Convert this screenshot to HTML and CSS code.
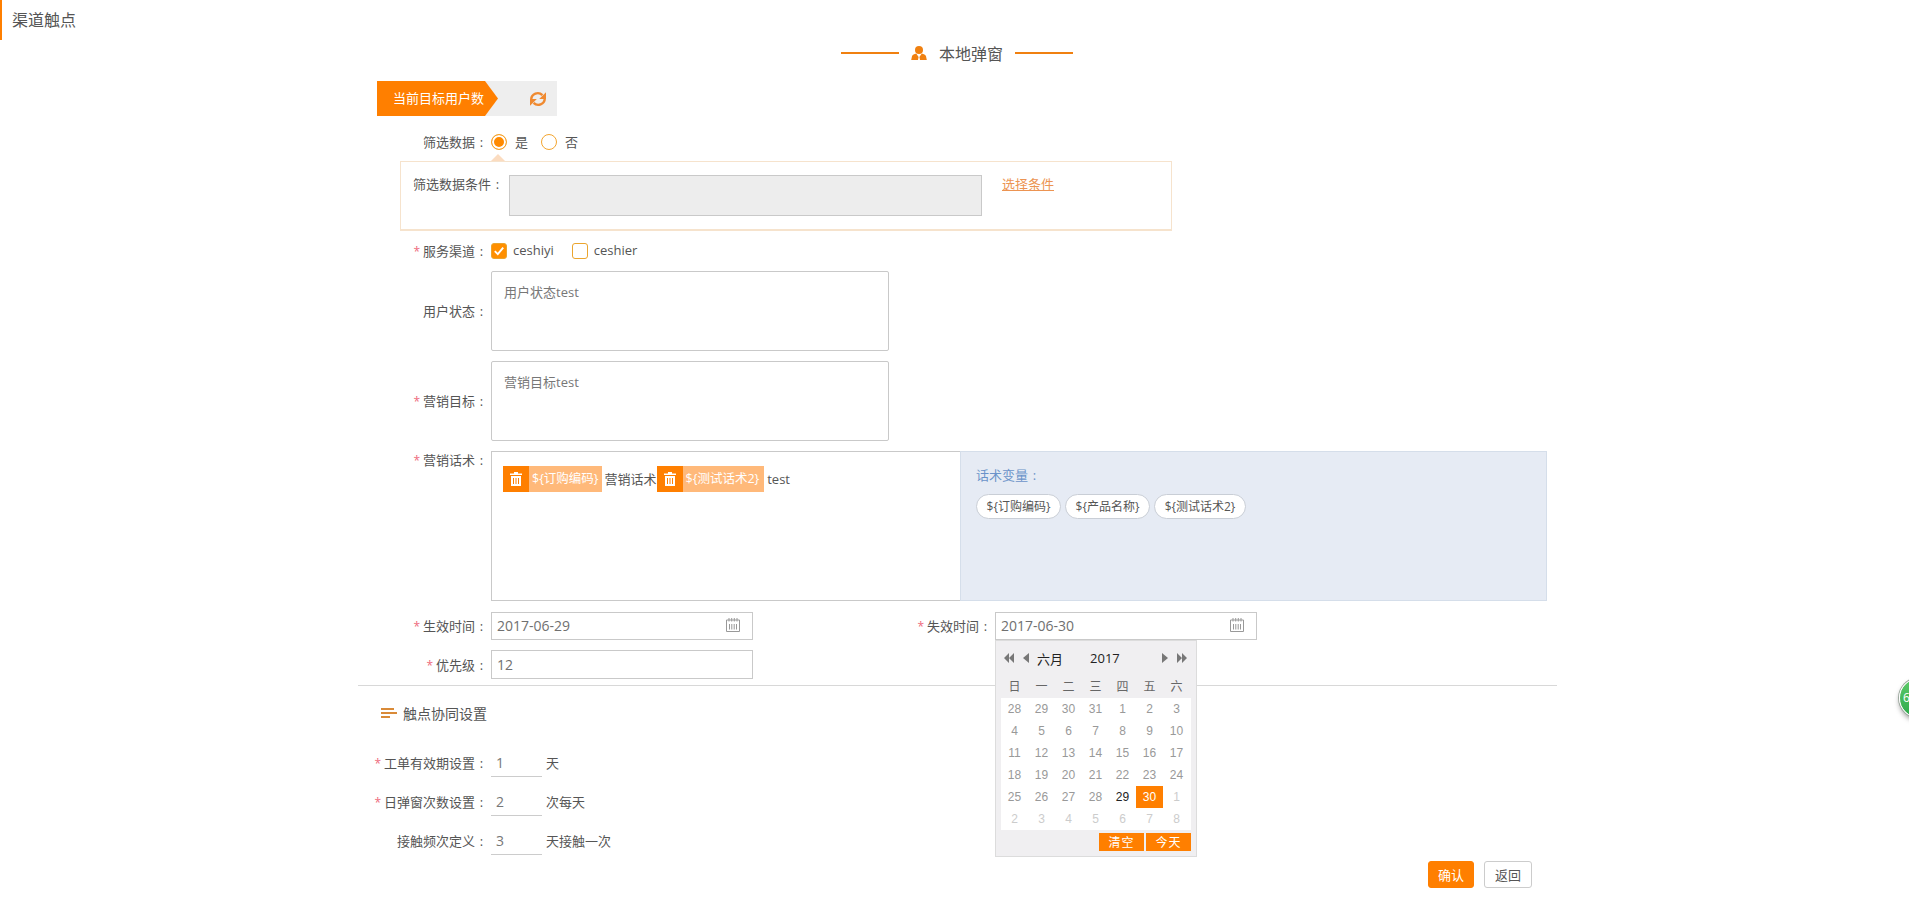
FILE: index.html
```html
<!DOCTYPE html>
<html lang="zh-CN">
<head>
    <meta charset="UTF-8">
    <meta name="viewport" content="width=device-width, initial-scale=1.0">
    <title>渠道触点</title>
    <link rel="stylesheet" href="styles.css">
</head>
<body>
    <header class="page-title">渠道触点</header>

    <main class="panel">
        <h2 class="channel-head">
            <span class="head-line"></span>
            <svg class="head-icon" viewBox="0 0 16 14"><circle cx="8" cy="4" r="4"/><path d="M5.2 7.6 7.6 11 7 14H0.2L1 10.2C1.4 8.8 3.4 8 5.2 7.6ZM10.8 7.6C12.6 8 14.6 8.8 15 10.2L15.8 14H9L8.4 11Z"/></svg>
            <span class="head-text">本地弹窗</span>
            <span class="head-line"></span>
        </h2>

        <div class="target-bar">
            <div class="target-label">当前目标用户数</div>
            <svg class="refresh-icon" viewBox="0 0 18 16">
                <path class="refresh-arc" d="M2.2 8.500A6.500 6.500 0 0 1 13.400 4.200"/>
                <path d="M17 1.200v6.800h-6.800Z"/>
                <path class="refresh-arc" d="M15.800 7.500A6.500 6.500 0 0 1 4.600 11.800"/>
                <path d="M1 14.800v-6.800h6.800Z"/>
            </svg>
        </div>

        <div class="row row-choice first-choice">
            <div class="label">筛选数据<span class="colon">:</span></div>
            <span class="radio radio-on"></span><span class="opt">是</span>
            <span class="radio radio-off"></span><span class="opt">否</span>
        </div>

        <div class="filter-box">
            <div class="filter-label">筛选数据条件<span class="colon">:</span></div>
            <div class="filter-input"></div>
            <a class="filter-link" href="#">选择条件</a>
        </div>

        <div class="row row-choice service-row">
            <div class="label"><span class="star">*</span>服务渠道<span class="colon">:</span></div>
            <span class="check check-on"><svg viewBox="0 0 14 14"><path d="M2.800 7.200 5.800 10.200 11.200 3.600" fill="none" stroke="#fff" stroke-width="1.900"/></svg></span><span class="opt opt-latin">ceshiyi</span>
            <span class="check"></span><span class="opt opt-latin">ceshier</span>
        </div>

        <div class="row row-area">
            <div class="label">用户状态<span class="colon">:</span></div>
            <div class="area">用户状态test</div>
        </div>

        <div class="row row-area gap-10">
            <div class="label"><span class="star">*</span>营销目标<span class="colon">:</span></div>
            <div class="area">营销目标test</div>
        </div>

        <div class="row row-script gap-10">
            <div class="label"><span class="star">*</span>营销话术<span class="colon">:</span></div>
            <div class="script-box">
                <div class="script-text">
                    <span class="tag"><span class="tag-del"><svg viewBox="0 0 12 14"><path d="M4 0h4v1.500h4V3H0V1.500h4ZM1 4h10v10H1ZM3 6v6h1V6ZM5.500 6v6h1V6ZM8 6v6h1V6Z" fill-rule="evenodd"/></svg></span><span class="tag-name">${订购编码}</span></span><span class="plain">营销话术</span><span class="tag tag-next"><span class="tag-del"><svg viewBox="0 0 12 14"><path d="M4 0h4v1.500h4V3H0V1.500h4ZM1 4h10v10H1ZM3 6v6h1V6ZM5.500 6v6h1V6ZM8 6v6h1V6Z" fill-rule="evenodd"/></svg></span><span class="tag-name">${测试话术2}</span></span><span class="plain plain-end">test</span>
                </div>
                <div class="script-vars">
                    <div class="vars-title">话术变量<span class="colon">:</span></div>
                    <div class="vars-list">
                        <span class="chip">${订购编码}</span>
                        <span class="chip">${产品名称}</span>
                        <span class="chip chip-wide">${测试话术2}</span>
                    </div>
                </div>
            </div>
        </div>

        <div class="row row-date">
            <div class="label"><span class="star">*</span>生效时间<span class="colon">:</span></div>
            <div class="field">
                <span>2017-06-29</span>
                <svg class="cal-icon" viewBox="0 0 14 14"><path d="M.5 2h13v11.500H.5ZM3 0v3.500M5.700 0v3.500M8.300 0v3.500M11 0v3.500M3.500 6v5.500M5.800 6v5.500M8.200 6v5.500M10.500 6v5.500"/></svg>
            </div>
            <div class="label label-end"><span class="star">*</span>失效时间<span class="colon">:</span></div>
            <div class="field field-open">
                <span>2017-06-30</span>
                <svg class="cal-icon" viewBox="0 0 14 14"><path d="M.5 2h13v11.500H.5ZM3 0v3.500M5.700 0v3.500M8.300 0v3.500M11 0v3.500M3.500 6v5.500M5.800 6v5.500M8.200 6v5.500M10.500 6v5.500"/></svg>

                <div class="calendar">
                    <div class="cal-head">
                        <svg class="cal-arrow arrow-dbl" viewBox="0 0 10 10"><path d="M5 0v10L0 5ZM10 0v10L5 5Z"/></svg>
                        <svg class="cal-arrow arrow-one" viewBox="0 0 6 10"><path d="M6 0v10L0 5Z"/></svg>
                        <span class="cal-month">六月</span>
                        <span class="cal-year">2017</span>
                        <svg class="cal-arrow arrow-next" viewBox="0 0 6 10"><path d="M0 0v10L6 5Z"/></svg>
                        <svg class="cal-arrow arrow-last" viewBox="0 0 10 10"><path d="M0 0v10L5 5ZM5 0v10L10 5Z"/></svg>
                    </div>
                    <div class="cal-week">
                        <span>日</span><span>一</span><span>二</span><span>三</span><span>四</span><span>五</span><span>六</span>
                    </div>
                    <div class="cal-days">
                        <span>28</span><span>29</span><span>30</span><span>31</span><span>1</span><span>2</span><span>3</span>
                        <span>4</span><span>5</span><span>6</span><span>7</span><span>8</span><span>9</span><span>10</span>
                        <span>11</span><span>12</span><span>13</span><span>14</span><span>15</span><span>16</span><span>17</span>
                        <span>18</span><span>19</span><span>20</span><span>21</span><span>22</span><span>23</span><span>24</span>
                        <span>25</span><span>26</span><span>27</span><span>28</span><span class="today">29</span><span class="picked">30</span><span class="off">1</span>
                        <span class="off">2</span><span class="off">3</span><span class="off">4</span><span class="off">5</span><span class="off">6</span><span class="off">7</span><span class="off">8</span>
                    </div>
                    <div class="cal-foot">
                        <span class="cal-btn">清空</span>
                        <span class="cal-btn">今天</span>
                    </div>
                </div>
            </div>
        </div>

        <div class="row row-date gap-10 row-priority">
            <div class="label"><span class="star">*</span>优先级<span class="colon">:</span></div>
            <div class="field"><span>12</span></div>
        </div>

        <hr class="divider">

        <h3 class="sub-head">
            <svg class="sub-icon" viewBox="0 0 16 10"><path d="M0 0h13v2H0ZM0 4h16v2H0ZM0 8h9v2H0Z"/></svg>
            触点协同设置
        </h3>

        <div class="row row-num first-num">
            <div class="label"><span class="star">*</span>工单有效期设置<span class="colon">:</span></div>
            <div class="num">1</div><span class="unit">天</span>
        </div>
        <div class="row row-num">
            <div class="label"><span class="star">*</span>日弹窗次数设置<span class="colon">:</span></div>
            <div class="num">2</div><span class="unit">次每天</span>
        </div>
        <div class="row row-num">
            <div class="label">接触频次定义<span class="colon">:</span></div>
            <div class="num">3</div><span class="unit">天接触一次</span>
        </div>

        <div class="actions">
            <button class="btn btn-ok" type="button">确认</button>
            <button class="btn" type="button">返回</button>
        </div>
    </main>

    <div class="float-ball">6</div>
</body>
</html>
```

FILE: styles.css
```css
body, h2, h3, hr {
    margin: 0;
    padding: 0;
}

body {
    font-family: "Open Sans", "Noto Sans CJK SC", sans-serif;
    font-size: 13px;
    color: #555;
    background-color: #fff;
    height: 903px;
    overflow: hidden;
    position: relative;
}

.page-title {
    height: 40px;
    line-height: 40px;
    border-left: 2px solid #ff7f00;
    padding-left: 10px;
    font-size: 16px;
}

.panel {
    width: 1200px;
    margin-left: 357px;
}

.channel-head {
    height: 26px;
    display: flex;
    align-items: center;
    justify-content: center;
    font-size: 16px;
    font-weight: normal;
}

.head-line {
    width: 58px;
    height: 2px;
    background-color: #f08010;
}

.head-icon {
    width: 16px;
    height: 14px;
    fill: #f08010;
    margin: 0 12px;
}

.head-text {
    margin-right: 12px;
}

.target-bar {
    width: 180px;
    height: 35px;
    margin: 15px 0 0 20px;
    background-color: #eee;
    display: flex;
    align-items: center;
}

.target-label {
    width: 121px;
    height: 35px;
    line-height: 35px;
    padding-left: 16px;
    box-sizing: border-box;
    color: #fff;
    background-color: #ff7f00;
    clip-path: polygon(0 0, 108px 0, 121px 50%, 108px 100%, 0 100%);
}

.refresh-icon {
    width: 18px;
    height: 16px;
    fill: #f08a30;
    margin-left: 31px;
}

.refresh-arc {
    fill: none;
    stroke: #f08a30;
    stroke-width: 2.400;
}

.row {
    display: flex;
    align-items: center;
}

.label {
    flex: none;
    width: 131px;
    margin-right: 3px;
    padding-bottom: 2px;
    text-align: right;
}

.colon {
    display: inline-block;
    width: 13px;
    text-align: center;
}

.star {
    color: #ee6a7c;
    margin-right: 3px;
    font-size: 12px;
}

.row-choice {
    height: 24px;
}

.first-choice {
    margin-top: 14px;
}

.radio {
    width: 16px;
    height: 16px;
    box-sizing: border-box;
    border: 1px solid #f3a530;
    border-radius: 50%;
    background-color: #fff;
}

.radio-on {
    background-color: #ff8a00;
    box-shadow: inset 0 0 0 2px #fff;
}

.opt {
    margin: 0 13px 0 8px;
    padding-bottom: 2px;
    color: #555;
}

.opt-latin {
    margin: 0 18px 0 6px;
}

.filter-box {
    position: relative;
    width: 772px;
    height: 70px;
    box-sizing: border-box;
    margin: 7px 0 0 43px;
    border: 1px solid #f6e3cd;
    border-bottom-width: 2px;
    display: flex;
    align-items: flex-start;
}

.filter-box::before {
    content: "";
    position: absolute;
    top: -8px;
    left: 90px;
    border-left: 7px solid transparent;
    border-right: 7px solid transparent;
    border-bottom: 7px solid #fbdcc0;
}

.filter-label {
    width: 96px;
    margin: 12px 0 0 12px;
    line-height: 20px;
}

.filter-input {
    width: 473px;
    height: 41px;
    box-sizing: border-box;
    margin-top: 13px;
    border: 1px solid #c9c9c9;
    background-color: #ededed;
}

.filter-link {
    margin: 12px 0 0 20px;
    line-height: 20px;
    color: #ec9452;
}

.service-row {
    margin-top: 8px;
}

.check {
    width: 16px;
    height: 16px;
    box-sizing: border-box;
    border: 1px solid #eba52e;
    border-radius: 3px;
    display: block;
}

.check-on {
    background-color: #ff8f00;
}

.check svg {
    display: block;
    width: 14px;
    height: 14px;
}

.row-area {
    height: 80px;
    margin-top: 8px;
}

.gap-10 {
    margin-top: 10px;
}

.area {
    width: 398px;
    height: 80px;
    box-sizing: border-box;
    border: 1px solid #c9c9c9;
    border-radius: 2px;
    padding: 10px 12px;
    line-height: 20px;
    color: #777;
}

.row-script {
    align-items: flex-start;
}

.row-script .label {
    line-height: 18px;
    padding-bottom: 0;
}

.script-box {
    width: 1056px;
    height: 150px;
    display: flex;
}

.script-text {
    width: 469px;
    box-sizing: border-box;
    border: 1px solid #c9c9c9;
    border-right: 0;
    padding: 14px 0 0 11px;
    display: flex;
    align-items: flex-start;
}

.tag {
    height: 26px;
    display: flex;
    background-color: #ffb97a;
    color: #fff;
}

.tag-del {
    width: 26px;
    background-color: #ff7f00;
    display: flex;
    align-items: center;
    justify-content: center;
}

.tag-del svg {
    width: 12px;
    height: 14px;
    fill: #fff;
}

.tag-name {
    line-height: 26px;
    padding: 0 3px;
    font-size: 12.500px;
    white-space: nowrap;
}

.tag-next .tag-name {
    padding-right: 5px;
}

.plain {
    line-height: 26px;
    margin-left: 3px;
    color: #555;
}

.script-vars {
    flex: 1;
    box-sizing: border-box;
    border: 1px solid #d5deea;
    background-color: #e6ebf4;
    padding: 13px 0 0 15px;
}

.vars-title {
    color: #6b93c9;
    line-height: 20px;
}

.vars-list {
    margin-top: 9px;
    display: flex;
    gap: 4px;
}

.chip {
    width: 85px;
    height: 25px;
    line-height: 23px;
    box-sizing: border-box;
    border: 1px solid #c9ced6;
    border-radius: 13px;
    background-color: #fff;
    text-align: center;
    font-size: 12px;
    color: #555;
    white-space: nowrap;
}

.chip-wide {
    width: 92px;
}

.row-date {
    margin-top: 11px;
}

.row-priority {
    margin-top: 10px;
}

.field {
    position: relative;
    width: 262px;
    height: 28px;
    box-sizing: border-box;
    border: 1px solid #c9c9c9;
    padding: 0 5px 2px;
    display: flex;
    align-items: center;
    justify-content: space-between;
    font-size: 14px;
    color: #707070;
}

.row-priority .field {
    height: 29px;
    padding-bottom: 0;
}

.row-priority .label {
    padding-bottom: 0;
}

.label-end {
    width: 239px;
}

.cal-icon {
    width: 14px;
    height: 14px;
    margin-right: 7px;
    fill: none;
    stroke: #999;
    stroke-width: 1;
}

.calendar {
    position: absolute;
    top: 27px;
    left: -1px;
    z-index: 2;
    width: 202px;
    height: 217px;
    box-sizing: border-box;
    border: 1px solid #dcdcdc;
    background-color: #f0eff1;
    padding: 0 5px;
    font-family: "Liberation Sans", "Noto Sans CJK SC", sans-serif;
    font-size: 12px;
    color: #666;
}

.cal-head {
    height: 36px;
    box-sizing: border-box;
    padding-bottom: 2px;
    display: flex;
    align-items: center;
    color: #222;
    font-size: 13px;
    font-family: "Open Sans", "Noto Sans CJK SC", sans-serif;
    white-space: nowrap;
}

.cal-arrow {
    flex: none;
    height: 10px;
    fill: #777;
}

.arrow-dbl {
    width: 10px;
    margin-left: 3px;
}

.arrow-one {
    width: 6px;
    margin-left: 9px;
}

.arrow-next {
    width: 6px;
    margin-left: 42px;
}

.arrow-last {
    width: 10px;
    margin-left: 9px;
}

.cal-month {
    margin-left: 8px;
}

.cal-year {
    margin-left: 27px;
}

.cal-week,
.cal-days {
    display: grid;
    grid-template-columns: repeat(7, 27px);
    text-align: center;
}

.cal-week {
    height: 21px;
    line-height: 20px;
}

.cal-days {
    grid-auto-rows: 22px;
    line-height: 22px;
    background-color: #fff;
    color: #999;
    padding-right: 1px;
}

.cal-days .today {
    color: #222;
}

.cal-days .picked {
    color: #fff;
    background-color: #ff7f00;
}

.cal-days .off {
    color: #ccc;
}

.cal-foot {
    display: flex;
    justify-content: flex-end;
    gap: 2px;
    margin-top: 3px;
}

.cal-btn {
    width: 45px;
    height: 18px;
    line-height: 18px;
    text-align: center;
    background-color: #ff7f00;
    color: #fff;
    letter-spacing: 1px;
    font-family: "Noto Sans CJK SC", sans-serif;
}

.divider {
    border: 0;
    height: 1px;
    margin-top: 6px;
    margin-left: 1px;
    background-color: #d8d8d8;
}

.sub-head {
    height: 20px;
    margin: 17px 0 0 24px;
    display: flex;
    align-items: center;
    font-size: 14px;
    font-weight: normal;
    color: #555;
}

.sub-icon {
    width: 16px;
    height: 10px;
    margin-right: 6px;
    fill: #d98a38;
}

.row-num {
    height: 27px;
    margin-top: 12px;
}

.first-num {
    margin-top: 27px;
}

.num {
    width: 51px;
    height: 27px;
    line-height: 25px;
    box-sizing: border-box;
    border-bottom: 1px solid #ccc;
    padding-left: 5px;
    font-size: 14px;
    color: #777;
}

.unit {
    margin-left: 4px;
    padding-bottom: 2px;
}

.actions {
    display: flex;
    justify-content: flex-end;
    gap: 10px;
    margin-top: 6px;
    padding-right: 25px;
}

.btn {
    width: 48px;
    height: 27px;
    padding: 0;
    border: 1px solid #ccc;
    border-radius: 3px;
    background-color: #fff;
    color: #555;
    font-family: "Noto Sans CJK SC", sans-serif;
    font-size: 13px;
}

.btn-ok {
    width: 46px;
    border-color: #ff7f00;
    background-color: #ff7f00;
    color: #fff;
}

.float-ball {
    position: absolute;
    left: 1899px;
    top: 678px;
    width: 40px;
    height: 40px;
    line-height: 38px;
    padding-left: 3px;
    box-sizing: border-box;
    border-radius: 50%;
    background-image: linear-gradient(#5ecb6a, #2ea84a);
    border: 1px solid #fff;
    box-shadow: 0 0 0 1px #9aa79c, 0 3px 5px rgba(0, 0, 0, 0.35);
    color: #fff;
    font-size: 12px;
}
```
